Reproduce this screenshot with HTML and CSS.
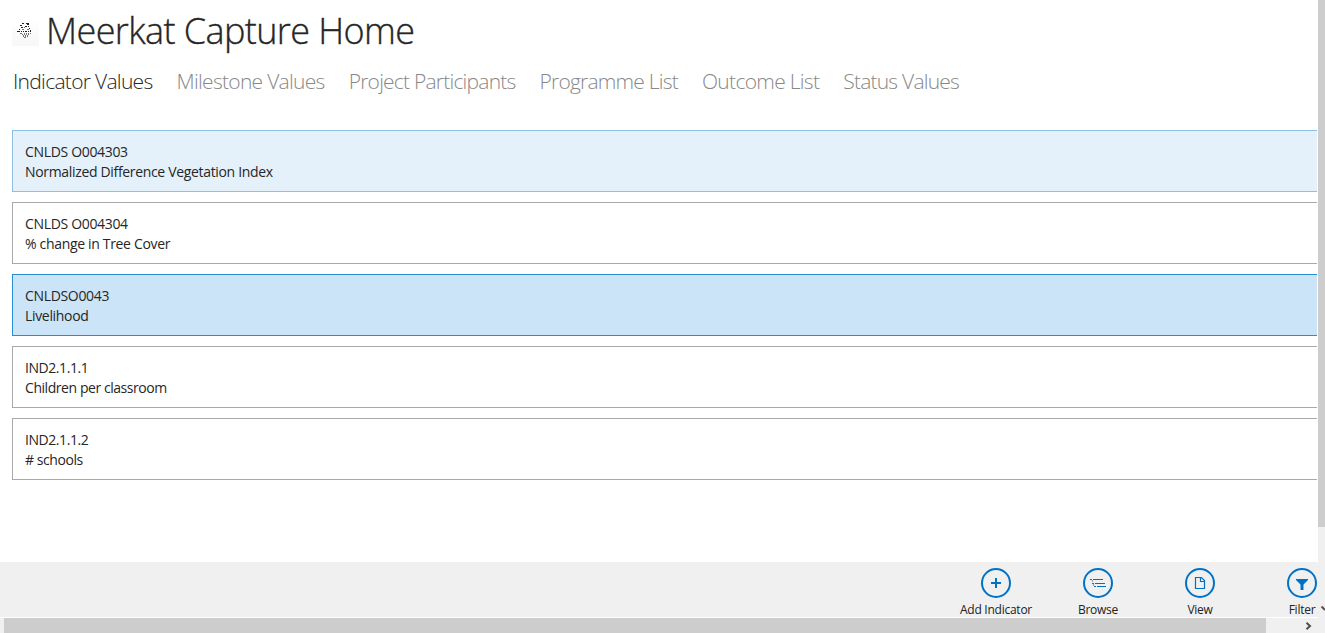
FILE: index.html
```html
<!DOCTYPE html>
<html lang="en">
<head>
<meta charset="utf-8">
<title>Meerkat Capture Home</title>
<link rel="stylesheet" href="styles.css">
</head>
<body>
<div class="window">
  <main class="screen">
    <header class="header">
      <svg class="logo" viewBox="0 0 27 24">
        <path d="M14 1h3v2h-2v-1h-1zM10 1h2v1h-2zM8 3h2v1h-2zM13 4h2v1h-2zM16 4h1v1h-1zM9 5h2v1h-2zM17 6h1v1h-1zM7 7h1v1h-1zM5 9h3v1h-3zM9 9h1v1h-1zM11 9h1v1h-1zM13 9h2v1h-2zM16 9h1v1h-1zM18 8h1v2h-1z"/>
        <path class="faint" d="M12 5h1v1h-1zM10 7h2v1h-2zM15 7h2v1h-2zM8 11h2v1h-2zM10 12h1v1h-1zM12 11h1v2h-1zM14 11h1v2h-1zM16 11h1v2h-1zM18 11h1v1h-1zM11 13h1v2h-1zM13 13h1v2h-1zM15 13h1v2h-1zM12 15h2v1h-2z"/>
      </svg>
      <h1 class="title">Meerkat Capture Home</h1>
    </header>
    <nav class="tabs">
      <span class="tab tab-active">Indicator Values</span>
      <span class="tab">Milestone Values</span>
      <span class="tab tab-long">Project Participants</span>
      <span class="tab tab-long">Programme List</span>
      <span class="tab">Outcome List</span>
      <span class="tab tab-long">Status Values</span>
    </nav>
    <section class="list">
      <article class="item item-hover"><div>CNLDS O004303</div><div>Normalized Difference Vegetation Index</div></article>
      <article class="item"><div>CNLDS O004304</div><div>% change in Tree Cover</div></article>
      <article class="item item-selected"><div>CNLDSO0043</div><div>Livelihood</div></article>
      <article class="item item-tight"><div>IND2.1.1.1</div><div>Children per classroom</div></article>
      <article class="item item-tight"><div>IND2.1.1.2</div><div># schools</div></article>
    </section>
    <footer class="commands">
      <div class="command">
        <svg class="icon" viewBox="0 0 30 30"><circle cx="15" cy="15" r="14"/><path d="M10 15h10M15 10v10"/></svg>
        <span>Add Indicator</span>
      </div>
      <div class="command">
        <svg class="icon" viewBox="0 0 30 30"><circle cx="15" cy="15" r="14"/><path class="thin" d="M7 11.500h2M10 11.500h10M9 15.500h2M12 15.500h10M11 18.500h2M14 18.500h9"/><path class="thin" d="M9.500 12.500v1M10.500 16.500v1"/></svg>
        <span>Browse</span>
      </div>
      <div class="command">
        <svg class="icon" viewBox="0 0 30 30"><circle cx="15" cy="15" r="14"/><path class="thin" d="M10.500 9.500h6l3 3v8h-9zM15.500 9.500v4h4"/></svg>
        <span>View</span>
      </div>
      <div class="command">
        <svg class="icon" viewBox="0 0 30 30"><circle cx="15" cy="15" r="14"/><path class="solid" d="M9 11h12v1l-4.500 4.500V22h-3v-5.500L9 12z"/></svg>
        <span>Filter</span>
      </div>
    </footer>
  </main>
  <div class="vbar">
    <div class="vthumb"></div>
    <svg class="varrow" viewBox="0 0 7 8"><path d="M3.500 1.500L7 5"/></svg>
  </div>
  <div class="hbar">
    <div class="hthumb"></div>
    <svg class="harrow" viewBox="0 0 8 8"><path d="M1.500 .8L5 4 1.500 7.200"/></svg>
  </div>
</div>
</body>
</html>
```
FILE: styles.css
```css
* { box-sizing: border-box; }
body { margin: 0; overflow: hidden; background: #fff; color: #262626; font-family: "Open Sans", "Noto Sans", sans-serif; }
.window { width: 1325px; height: 633px; display: grid; grid-template-columns: 1318px 7px; grid-template-rows: 618px 15px; }
.screen { display: flex; flex-direction: column; padding: 0 1px 1px 0; overflow: hidden; }
.header { display: flex; height: 64px; padding-left: 12px; }
.logo { width: 27px; height: 24px; margin-top: 22px; background: linear-gradient(#fefefe, #f7f7f7); fill: #222; }
.faint { fill: #777; }
.title { margin: 6px 0 0 7px; font-size: 36px; line-height: 50px; font-weight: 300; letter-spacing: -0.6px; white-space: nowrap; -webkit-text-stroke: 0.35px #262626; }
.tabs { display: flex; gap: 24px; height: 66px; padding-left: 13px; }
.tab { font-size: 21px; line-height: 34px; font-weight: 300; color: #888; letter-spacing: -0.7px; white-space: nowrap; }
.tab-long { letter-spacing: -0.78px; }
.tab-active { color: #262626; }
.list { display: flex; flex-direction: column; gap: 10px; height: 432px; padding-left: 12px; }
.item { height: 62px; border: 1px solid #a9a9a9; border-right: 0; padding: 11px 12px; font-size: 14px; line-height: 20px; letter-spacing: -0.33px; }
.item-hover { background: #e4f1fa; border-color: #8fbfe2; }
.item-selected { background: #cce4f7; border-color: #2a8dd4; }
.item-tight { letter-spacing: -0.44px; }
.commands { display: flex; justify-content: flex-end; height: 55px; padding-top: 6px; margin-right: -36px; background: #f0f0f0; }
.command { width: 102px; display: flex; flex-direction: column; align-items: center; font-size: 12px; line-height: 16px; gap: 4px; letter-spacing: -0.25px; white-space: nowrap; color: #222; }
.icon { flex: none; width: 30px; height: 30px; fill: none; stroke: #0072c6; stroke-width: 2; }
.thin { stroke-width: 1.2; }
.solid { fill: #0072c6; stroke: none; }
.vbar { display: flex; flex-direction: column; justify-content: space-between; background: #f0f0f0; }
.vthumb { height: 527px; background: #cdcdcd; }
.varrow { width: 7px; height: 8px; margin-bottom: 5px; fill: none; stroke: #555; stroke-width: 2; }
.hbar { grid-column: 1 / 3; display: flex; align-items: center; background: #f0f0f0; padding-left: 4px; }
.hthumb { width: 1262px; height: 15px; background: #cdcdcd; }
.harrow { width: 8px; height: 8px; margin-left: 39px; fill: none; stroke: #505050; stroke-width: 2; }
```
